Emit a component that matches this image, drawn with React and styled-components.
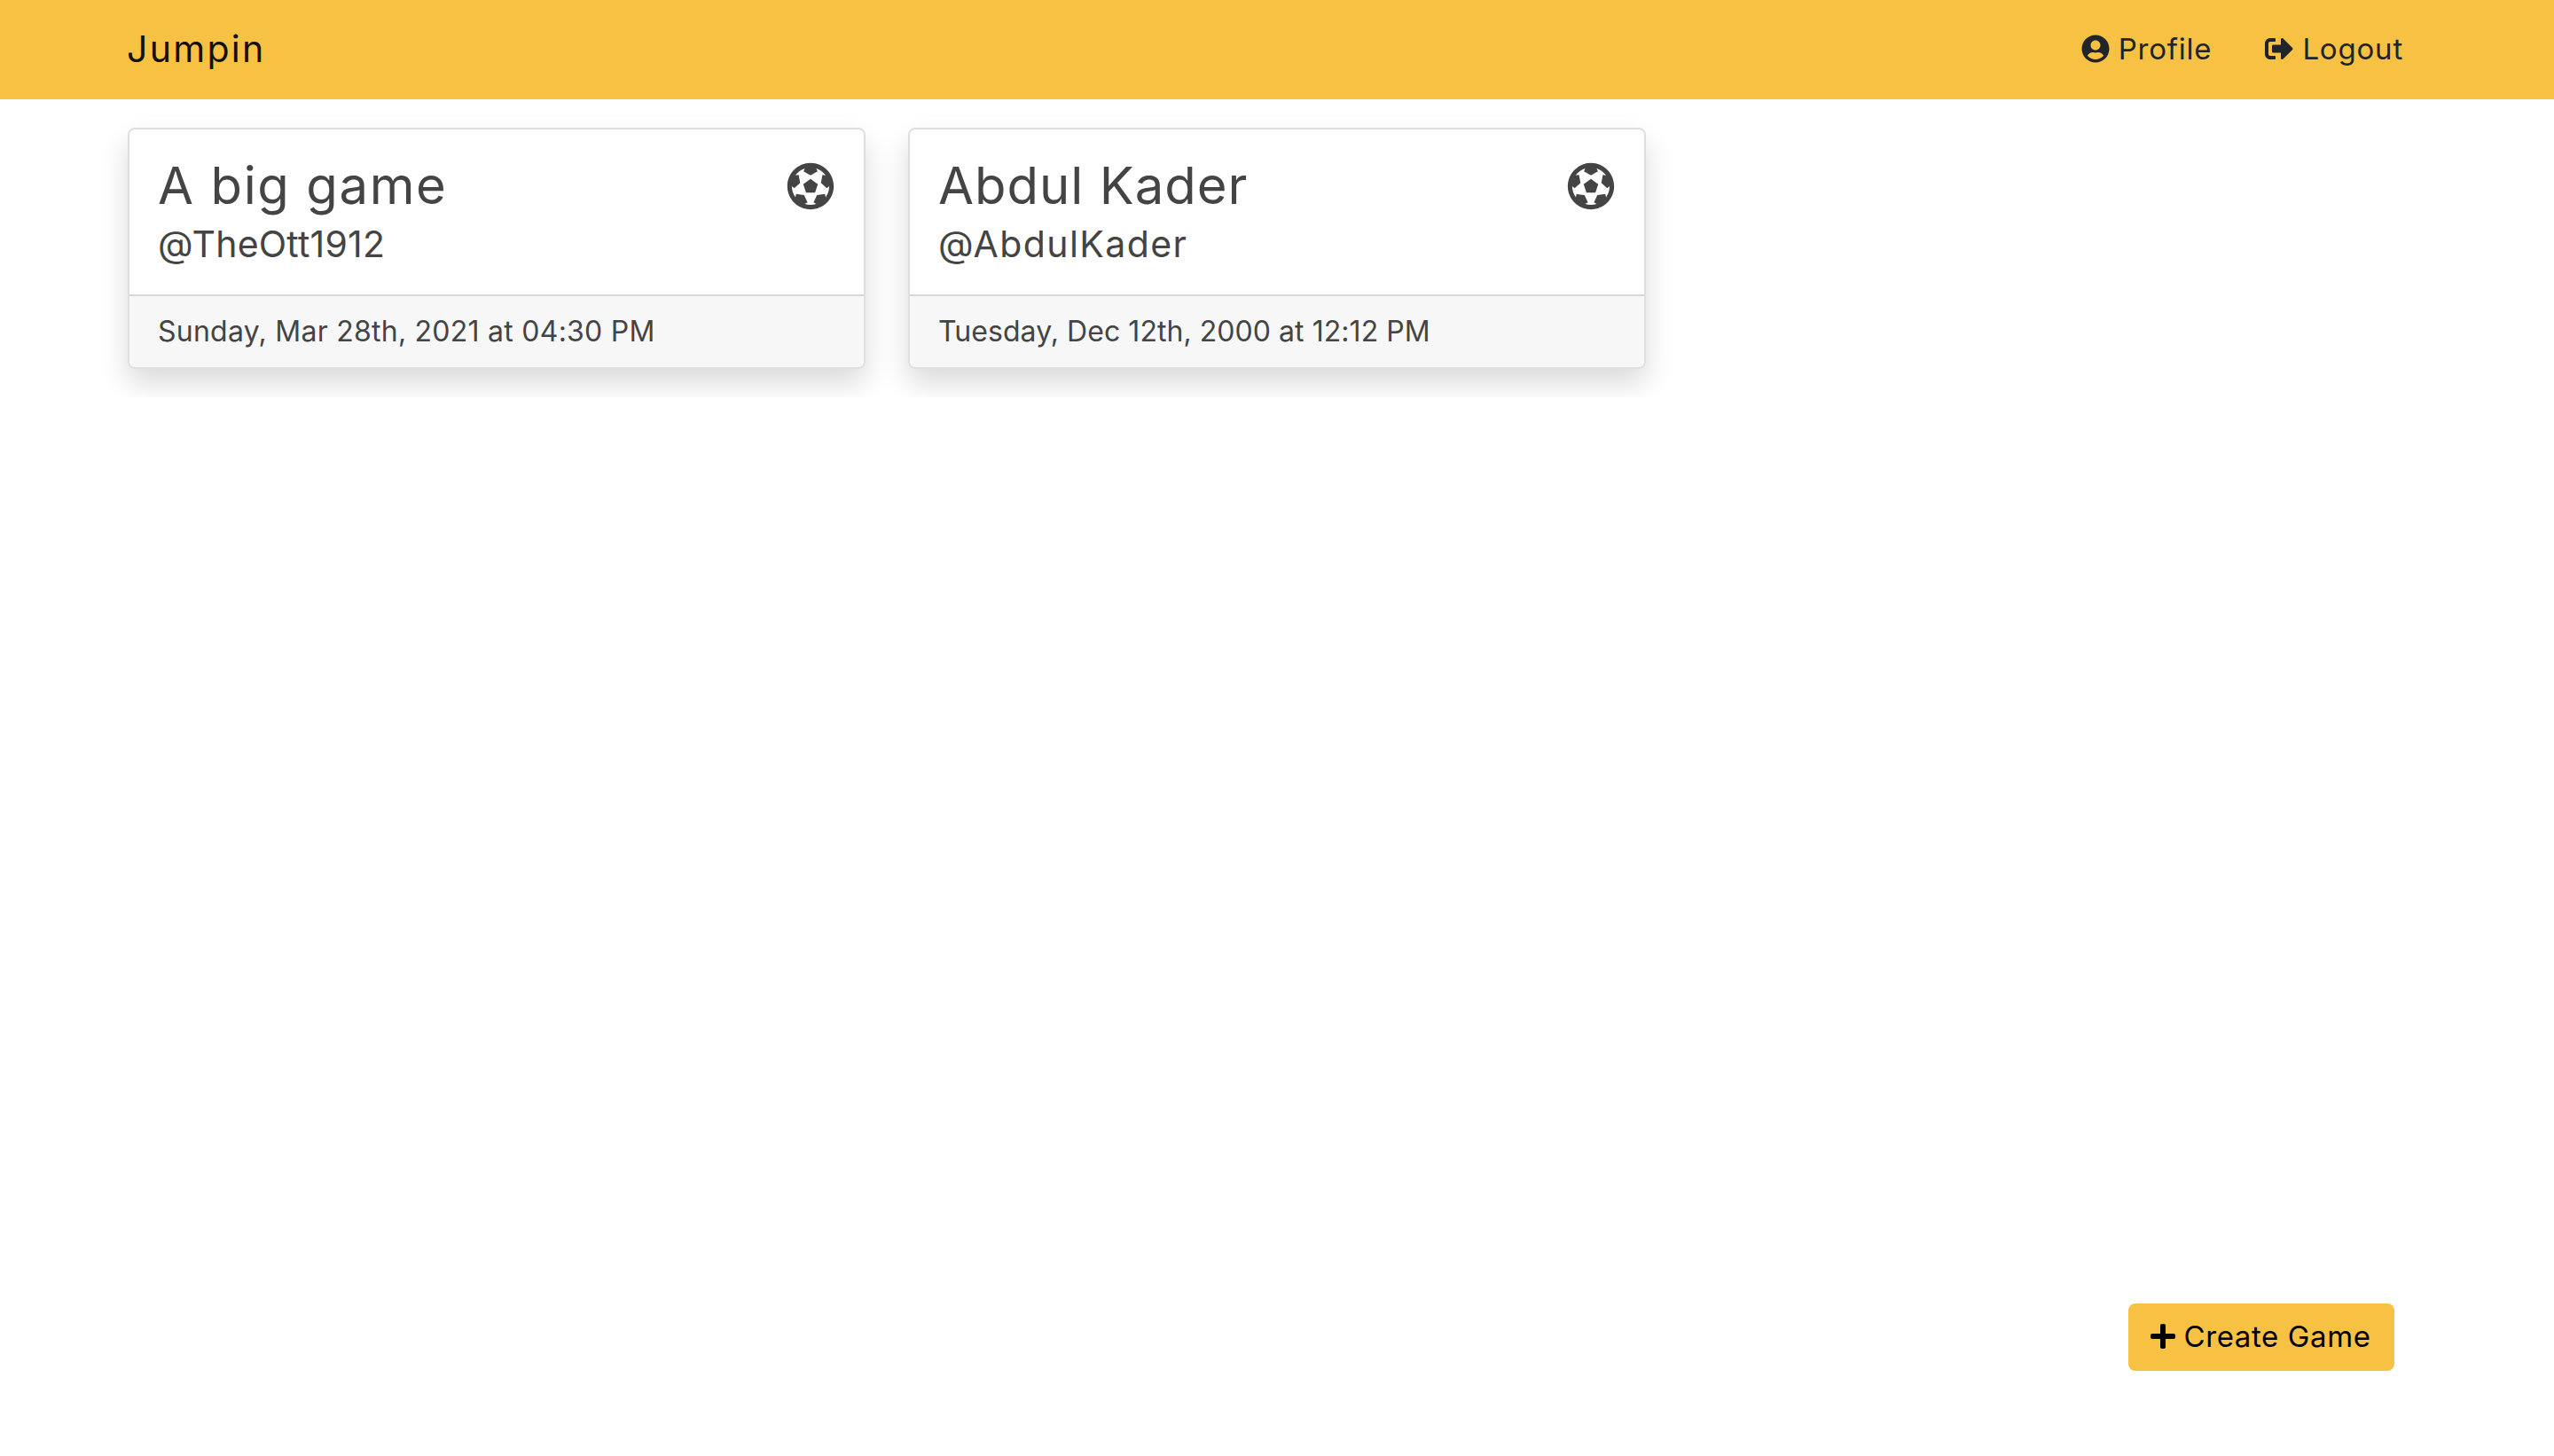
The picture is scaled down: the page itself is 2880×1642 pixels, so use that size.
import React from "react";
import styled, { createGlobalStyle } from "styled-components";
import { FaFutbol, FaPlus, FaSignOutAlt, FaUserCircle } from "react-icons/fa";

const games = [
  { title: "A big game", handle: "@TheOtt1912", date: "Sunday, Mar 28th, 2021 at 04:30 PM", titleSpacing: 1.6, handleSpacing: 0.2, dateSpacing: 0.25 },
  { title: "Abdul Kader", handle: "@AbdulKader", date: "Tuesday, Dec 12th, 2000 at 12:12 PM", titleSpacing: 1, handleSpacing: 1.4, dateSpacing: 0.05 },
];

export default function App() {
  return (
    <>
      <GlobalStyle />
      <Navbar>
        <Brand>Jumpin</Brand>
        <NavLinks>
          <NavLink>
            <FaUserCircle />
            Profile
          </NavLink>
          <NavLink>
            <FaSignOutAlt />
            Logout
          </NavLink>
        </NavLinks>
      </Navbar>
      <CardRow>
        {games.map((game) => (
          <Card key={game.handle}>
            <CardBody>
              <div>
                <Title $spacing={game.titleSpacing}>{game.title}</Title>
                <Handle $spacing={game.handleSpacing}>{game.handle}</Handle>
              </div>
              <BallIcon />
            </CardBody>
            <CardFooter $spacing={game.dateSpacing}>{game.date}</CardFooter>
          </Card>
        ))}
      </CardRow>
      <CreateButton>
        <FaPlus />
        Create Game
      </CreateButton>
    </>
  );
}

const GlobalStyle = createGlobalStyle`
  html, body {
    margin: 0;
    background: #fff;
    font-family: Inter, "Liberation Sans", sans-serif;
  }
`;

const Navbar = styled.nav`
  height: 112px;
  padding: 0 170px 2px 143px;
  box-sizing: border-box;
  display: flex;
  align-items: center;
  justify-content: space-between;
  background-color: #f7c244;
`;

const Brand = styled.div`
  font-size: 41px;
  letter-spacing: 2.3px;
  color: #111;
`;

const NavLinks = styled.div`
  display: flex;
  gap: 60px;
`;

const NavLink = styled.a`
  display: flex;
  align-items: center;
  gap: 10px;
  font-size: 33px;
  letter-spacing: 0.8px;
  color: #212529;

  svg {
    width: 32px;
    height: 32px;
  }
`;

const CardRow = styled.div`
  display: flex;
  gap: 48px;
  padding: 32px 144px;
`;

const Card = styled.div`
  width: 832px;
  height: 272px;
  box-sizing: border-box;
  display: flex;
  flex-direction: column;
  border: 2px solid rgba(0, 0, 0, 0.125);
  border-radius: 8px;
  box-shadow: 0 16px 32px rgba(0, 0, 0, 0.15);
  color: #444;
  overflow: hidden;
`;

const CardBody = styled.div`
  flex: 1;
  padding: 28px 32px 0;
  display: flex;
  align-items: flex-start;
  justify-content: space-between;
`;

const Title = styled.h5`
  margin: 0;
  font-size: 58px;
  font-weight: 400;
  line-height: 70px;
  letter-spacing: ${(props) => props.$spacing}px;
`;

const Handle = styled.div`
  margin-top: 6px;
  font-size: 41px;
  line-height: 50px;
  letter-spacing: ${(props) => props.$spacing}px;
`;

const BallIcon = styled(FaFutbol)`
  width: 54px;
  height: 54px;
  margin: 9px 1px 0 0;
`;

const CardFooter = styled.div`
  height: 82px;
  box-sizing: border-box;
  padding: 0 32px 2px;
  display: flex;
  align-items: center;
  border-top: 2px solid rgba(0, 0, 0, 0.125);
  background: #f7f7f7;
  font-size: 32px;
  letter-spacing: ${(props) => props.$spacing}px;
`;

const CreateButton = styled.button`
  position: fixed;
  right: 180px;
  bottom: 96px;
  width: 300px;
  height: 76px;
  padding: 0 4px 2px 0;
  display: flex;
  align-items: center;
  justify-content: center;
  gap: 8px;
  border: none;
  border-radius: 8px;
  background: #f7c244;
  color: #000;
  font-family: inherit;
  font-size: 33px;
  letter-spacing: 0.6px;

  svg {
    width: 32px;
    height: 32px;
  }
`;
